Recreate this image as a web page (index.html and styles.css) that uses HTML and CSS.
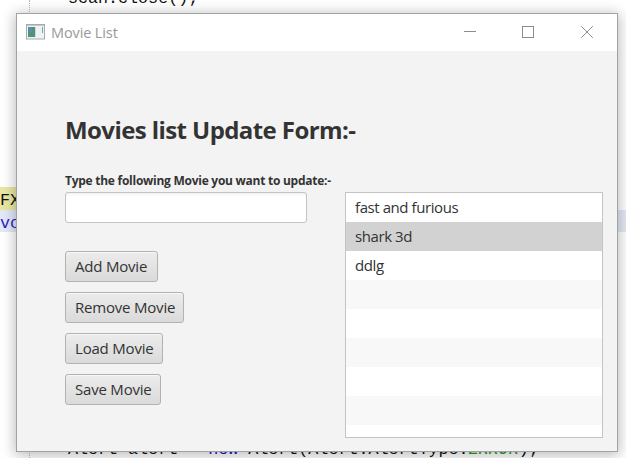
FILE: index.html
```html
<!DOCTYPE html>
<html lang="en">
<head>
<meta charset="utf-8">
<title>Movie List</title>
<link rel="stylesheet" href="styles.css">
</head>
<body>
<div class="desktop">
  <div class="guide"></div>
  <div class="code code-top">scan.close();</div>
  <div class="code mark mark-yellow">FX</div>
  <div class="code mark mark-blue">void</div>
  <div class="code code-bottom">Alert alert = <span class="keyword">new</span> Alert(Alert.AlertType.<span class="constant">ERROR</span>);</div>
  <main class="window">
    <header class="titlebar">
      <svg class="app-icon" width="19" height="16" viewBox="0 0 19 16">
        <rect x=".5" y=".5" width="18" height="14.5" fill="#eef2f3" stroke="#a4acb0"/>
        <path d="M1 1.5h17" stroke="#c3c9cc"/>
        <rect x="2" y="3" width="7" height="10" fill="#50917f"/>
        <path d="M2 3h4v5H2z" fill="#5b8f9b"/>
        <path d="M9.5 3v10" stroke="#c9dbd6"/>
        <path d="M16.5 3v6" stroke="#76a69a"/>
      </svg>
      <span class="caption">Movie List</span>
      <svg class="controls" width="132" height="14" viewBox="0 0 132 14" fill="none" stroke="#8c8c8c">
        <path d="M0 6.5h12"/>
        <rect x="58.5" y="1.5" width="11" height="11"/>
        <path d="M117.2 1.2l11.6 11.6M128.8 1.2L117.2 12.8"/>
      </svg>
    </header>
    <section class="content">
      <h1>Movies list Update Form:-</h1>
      <label for="movie">Type the following Movie you want to update:-</label>
      <div class="columns">
        <div class="form">
          <input id="movie" type="text">
          <button class="add">Add Movie</button>
          <button class="remove">Remove Movie</button>
          <button class="load">Load Movie</button>
          <button class="save">Save Movie</button>
        </div>
        <ul class="list">
          <li>fast and furious</li>
          <li class="selected">shark 3d</li>
          <li>ddlg</li>
          <li></li><li></li><li></li><li></li><li></li><li></li>
        </ul>
      </div>
    </section>
  </main>
</div>
</body>
</html>
```
FILE: styles.css
```css
* { box-sizing: border-box; }
body { margin: 0; background: #fff; font-family: "Open Sans", "Noto Sans", sans-serif; color: #333; }
.desktop { position: relative; width: 626px; height: 458px; overflow: hidden; }
.guide { position: absolute; left: 29px; top: 0; height: 458px; border-left: 1px dotted #bbb; }
.code { position: absolute; font: 16.7px/22px "Liberation Mono", monospace; color: #111; white-space: pre; }
.code-top { left: 68px; top: -12px; }
.code-bottom { left: 68px; top: 439px; }
.mark { left: 0; width: 626px; height: 23px; }
.mark-yellow { top: 187px; width: 100px; background: #e9e8a2; line-height: 27px; }
.mark-blue { top: 210px; background: #e4e9f7; color: #2424c8; height: 22px; line-height: 27px; }
.keyword { color: #1414c8; }
.constant { color: #2a9a2a; font-style: italic; }

.window {
  position: absolute; left: 16px; top: 13px; width: 602px; height: 439px;
  border: 1px solid #a2a2a2; background: #f3f3f3;
  box-shadow: 0 2px 13px 1px rgba(0, 0, 0, .28);
}
.titlebar { display: flex; align-items: center; height: 37px; padding: 0 21px 0 9px; background: #fff; }
.app-icon { margin-top: -2px; }
.controls { margin-top: -1px; }
.caption { flex: 1; margin-left: 6px; color: #999; font-size: 14.5px; letter-spacing: -.12px; }
.content { padding: 62px 14px 0 48px; }
h1 { margin: 0; height: 56px; font-size: 24px; line-height: 34px; font-weight: 700; letter-spacing: -.58px; white-space: nowrap; }
label { display: block; height: 23px; font-size: 12px; line-height: 23px; font-weight: 700; letter-spacing: -.26px; white-space: nowrap; }
.columns { display: flex; justify-content: space-between; }
.form { display: flex; flex-direction: column; align-items: flex-start; gap: 10px; }
input {
  width: 242px; height: 31px; margin: 0 0 18px; border: 1px solid #c4c4c4; border-radius: 3px;
  background: linear-gradient(#f3f3f3, #fff 4px); outline: none;
}
button {
  height: 31px; padding: 0 0 1px 9px; border: 1px solid #b2b2b2; border-radius: 3px; text-align: left;
  background: linear-gradient(#ececec, #dadada); box-shadow: inset 0 1px #f7f7f7;
  color: #333; font: 15px "Open Sans", sans-serif; letter-spacing: -.2px; white-space: nowrap;
}
.add { width: 93px; }
.remove { width: 119px; }
.load { width: 98px; }
.save { width: 96px; }
.list {
  width: 258px; height: 246px; margin: 0; padding: 0; list-style: none; overflow: hidden;
  border: 1px solid #c4c4c4; background: #fff; font-size: 15px; letter-spacing: -.42px;
}
.list li { height: 29px; padding-left: 9px; line-height: 29px; background: #fff; }
.list li:nth-child(even) { background: #f8f8f8; }
.list li.selected { background: #d2d2d2; }
```
